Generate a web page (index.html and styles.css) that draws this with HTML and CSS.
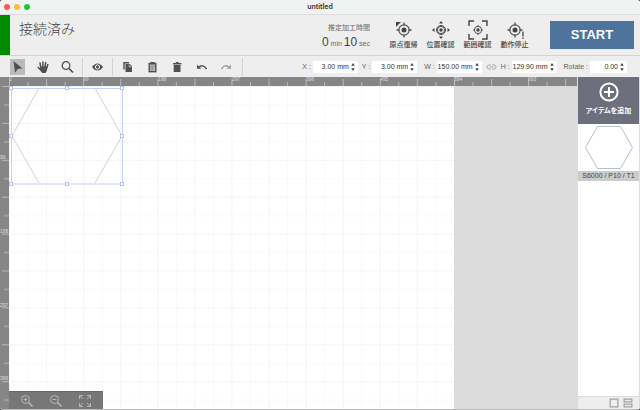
FILE: index.html
```html
<!DOCTYPE html>
<html lang="ja">
<head>
<meta charset="utf-8">
<title>untitled</title>
<link rel="stylesheet" href="styles.css">
</head>
<body>
<svg class="defs" aria-hidden="true">
  <defs>
    <g id="target" fill="none" stroke="#505050">
      <circle cx="10" cy="10" r="5.2" stroke-width="1.2"/>
      <circle cx="10" cy="10" r="2.5" fill="#444" stroke="none"/>
      <path d="M10 2.5v3M10 14.5v3M2.5 10h3M14.5 10h3" stroke-width="1.3"/>
    </g>
    <g id="target-small" fill="none" stroke="#505050">
      <circle cx="10" cy="10" r="3.6"/>
      <circle cx="10" cy="10" r="1.7" fill="#444" stroke="none"/>
      <path d="M10 5v2M10 13v2M5 10h2M13 10h2"/>
    </g>
    <g id="step" fill="#444"><path d="M0 3l2-3 2 3zM0 6l2 3 2-3z"/></g>
  </defs>
</svg>
<div class="window">
  <header class="titlebar">
    <div class="lights"><i class="red"></i><i class="yellow"></i><i class="green"></i></div>
    <h1>untitled</h1>
  </header>

  <section class="status">
    <div class="status-flag"></div>
    <p class="state">接続済み</p>
    <div class="estimate">
      <span>推定加工時間</span>
      <p><b>0</b> min <b>10</b> sec</p>
    </div>
    <div class="actions">
      <button type="button"><svg viewBox="0 0 20 20"><use href="#target"/><path d="M2 2h5L2 7z" fill="#444"/></svg>原点復帰</button>
      <button type="button"><svg viewBox="0 0 20 20"><use href="#target-small"/><circle cx="10" cy="10" r="4.500" fill="none" stroke="#505050"/><path d="M10 1l2 2.500H8zM10 19l2-2.500H8zM1 10l2.500-2v4zM19 10l-2.500-2v4z" fill="#444"/></svg>位置確認</button>
      <button type="button"><svg viewBox="0 0 20 20"><use href="#target-small"/><path d="M1 6V1h5M14 1h5v5M19 14v5h-5M6 19H1v-5" fill="none" stroke="#444" stroke-width="1.400"/></svg>範囲確認</button>
      <button type="button"><svg viewBox="0 0 20 20"><use href="#target"/><path d="M18 11.500v5M18 17.500v1.500" stroke="#444" stroke-width="1.300"/></svg>動作停止</button>
    </div>
    <button type="button" class="start">START</button>
  </section>

  <nav class="toolbar">
    <button type="button" class="tool selected" aria-label="Select"><svg viewBox="0 0 14 14"><path d="M2.500 1l9 7.500-4.500.300-3 4z" fill="#505050"/></svg></button>
    <button type="button" class="tool" aria-label="Hand"><svg viewBox="0 0 14 14"><path d="M4.800 7.500L4 3M6.900 7V2M9 7l.6-4.500M10.800 8l1-3.500M5 10L2.200 7.600" stroke="#505050" stroke-width="1.500" stroke-linecap="round"/><path d="M4.200 6.500h7.200l-.6 4.500-1.300 2H6.200L3.500 9.500z" fill="#505050"/></svg></button>
    <button type="button" class="tool" aria-label="Zoom"><svg viewBox="0 0 14 14"><circle cx="5" cy="5.500" r="3.800" fill="none" stroke="#505050" stroke-width="1.300"/><path d="M8 8.500l4 4" stroke="#505050" stroke-width="1.700"/></svg></button>
    <span class="rule"></span>
    <button type="button" class="tool" aria-label="View"><svg viewBox="0 0 14 14"><path d="M1 7Q3.500 3.400 6.500 3.400T12 7Q9.500 10.600 6.500 10.600T1 7z" fill="#505050"/><circle cx="6.500" cy="7" r="2.100" fill="#505050" stroke="#fff" stroke-width="1"/></svg></button>
    <span class="rule"></span>
    <button type="button" class="tool" aria-label="Copy"><svg viewBox="0 0 14 14"><path d="M3 9.500V2.700h5" fill="none" stroke="#505050" stroke-width="1.400"/><path d="M4.500 4h4.200L11 6.300V12H4.500z" fill="#505050"/><path d="M8.200 4.600v2.200h2.200" fill="none" stroke="#eee" stroke-width=".7"/></svg></button>
    <button type="button" class="tool" aria-label="Paste"><svg viewBox="0 0 14 14"><rect x="3.200" y="3.500" width="6.600" height="8.200" fill="#bbb" stroke="#505050" stroke-width="1.400"/><path d="M4.500 2h4v2.600h-4z" fill="#505050"/><path d="M4.500 6.500h4M4.500 8.300h4M4.500 10H7" stroke="#777" stroke-width=".7"/></svg></button>
    <button type="button" class="tool" aria-label="Delete"><svg viewBox="0 0 14 14"><path d="M2 3h2.500l.5-1h2.500l.5 1h2.500v1.400H2zM2.700 5h6.800v7H2.700z" fill="#505050"/></svg></button>
    <button type="button" class="tool" aria-label="Undo"><svg viewBox="0 0 14 14"><path d="M1 4.500v4.300h4.300z" fill="#505050"/><path d="M2.500 7.500Q7 3.500 10.500 9" fill="none" stroke="#505050" stroke-width="1.400"/></svg></button>
    <button type="button" class="tool faded" aria-label="Redo"><svg viewBox="0 0 14 14"><path d="M10 4.500v4.300H5.700z" fill="#505050"/><path d="M8.500 7.500Q4 3.500.5 9" fill="none" stroke="#505050" stroke-width="1.400"/></svg></button>
    <span class="rule last"></span>
    <form class="fields">
      <label>X : <span class="field"><input value="3.00 mm"><svg viewBox="0 0 4 9"><use href="#step"/></svg></span></label>
      <label>Y : <span class="field"><input value="3.00 mm"><svg viewBox="0 0 4 9"><use href="#step"/></svg></span></label>
      <label class="size">W : <span class="field"><input value="150.00 mm"><svg viewBox="0 0 4 9"><use href="#step"/></svg></span></label>
      <svg class="link" viewBox="0 0 11 6"><path d="M5 1H3a2 2 0 0 0 0 4h2M6 1h2a2 2 0 0 1 0 4H6M3.500 3h4" fill="none" stroke="#aaa"/></svg>
      <label>H : <span class="field"><input value="129.90 mm"><svg viewBox="0 0 4 9"><use href="#step"/></svg></span></label>
      <label class="size">Rotate : <span class="field narrow"><input value="0.00"><svg viewBox="0 0 4 9"><use href="#step"/></svg></span></label>
    </form>
  </nav>

  <main class="workspace">
    <div class="stage">
      <svg class="canvas" aria-label="Work area">
        <defs>
          <pattern id="grid" x="9" y="9" width="37.080" height="36.900" patternUnits="userSpaceOnUse">
            <path d="M.5 0v37M0 .5h37.100" stroke="#f4f4f4"/>
            <path d="M19 0v37M0 19h37.100" stroke="#fdf7f7"/>
          </pattern>
          <pattern id="ticks-x" x="9" y="0" width="37.080" height="9" patternUnits="userSpaceOnUse">
            <path d="M.5 2v7M19 5v4" stroke="#b9b9b9"/>
          </pattern>
          <pattern id="ticks-y" x="0" y="9" width="9" height="36.900" patternUnits="userSpaceOnUse">
            <path d="M2 .5h7M4 19h5" stroke="#b9b9b9"/>
          </pattern>
        </defs>
        <rect width="100%" height="100%" fill="#dbdbdb"/>
        <rect x="9" y="9" width="445" height="100%" fill="#fff"/>
        <rect x="9" y="9" width="445" height="100%" fill="url(#grid)"/>
        <rect width="100%" height="9" fill="#868686"/>
        <rect width="9" height="100%" fill="#868686"/>
        <rect x="9" width="100%" height="9" fill="url(#ticks-x)"/>
        <rect y="9" width="9" height="100%" fill="url(#ticks-y)"/>
        <g class="numbers">
          <text x="9" y="4">0</text><text x="83" y="4">99</text><text x="158" y="4">198</text><text x="232" y="4">297</text><text x="306" y="4">396</text><text x="380" y="4">495</text><text x="454" y="4">594</text><text x="528" y="4">693</text>
          <text x="0" y="82">99</text><text x="0" y="156">198</text><text x="0" y="230">297</text><text x="0" y="303">396</text>
        </g>
        <path d="M39 11L12 59l27 47M95 11l27 48-27 47" fill="none" stroke="#c6c6c6" stroke-width=".8"/>
        <rect x="11.500" y="11.500" width="111" height="95.500" fill="none" stroke="#c3d0fa"/>
        <g fill="#fff" stroke="#b4c4f8">
          <rect x="9.500" y="9.500" width="3" height="3"/><rect x="65.500" y="9.500" width="3" height="3"/><rect x="120.500" y="9.500" width="3" height="3"/>
          <rect x="9.500" y="57.500" width="3" height="3"/><rect x="120.500" y="57.500" width="3" height="3"/>
          <rect x="9.500" y="105.500" width="3" height="3"/><rect x="65.500" y="105.500" width="3" height="3"/><rect x="120.500" y="105.500" width="3" height="3"/>
        </g>
      </svg>
      <div class="zoombar">
        <button type="button" aria-label="Zoom in"><svg viewBox="0 0 14 14"><circle cx="5.500" cy="5.500" r="4"/><path d="M8.500 8.500l4 4" stroke-width="1.600"/><path d="M3.500 5.500h4M5.500 3.500v4"/></svg></button>
        <button type="button" aria-label="Zoom out"><svg viewBox="0 0 14 14"><circle cx="5.500" cy="5.500" r="4"/><path d="M8.500 8.500l4 4" stroke-width="1.600"/><path d="M3.500 5.500h4"/></svg></button>
        <button type="button" aria-label="Fit"><svg viewBox="0 0 14 14"><path d="M1.500 5V1.500H5M1.500 1.500l3.500 3.500M9 1.500h3.500V5M12.500 1.500L9 5M1.500 9v3.500H5M1.500 12.500L5 9M12.500 9v3.500H9M12.500 12.500L9 9"/></svg></button>
      </div>
    </div>
    <aside class="items">
      <button type="button" class="add"><svg viewBox="0 0 20 20"><circle cx="10" cy="10" r="8.600"/><path d="M10 5v10M5 10h10"/></svg>アイテムを追加</button>
      <div class="item">
        <svg viewBox="0 0 48 43"><path d="M12.500.5h23l12 21-12 21h-23l-12-21z" fill="none" stroke="#b4bfd4"/></svg>
        <p>S6000 / P10 / T1</p>
      </div>
      <footer>
        <button type="button" aria-label="Single view"><svg viewBox="0 0 9 9"><rect x="1" y="1" width="7" height="7"/></svg></button>
        <button type="button" aria-label="List view"><svg viewBox="0 0 9 9"><rect x="1" y="1" width="7" height="2.500"/><rect x="1" y="5.500" width="7" height="2.500"/></svg></button>
      </footer>
    </aside>
  </main>
</div>
</body>
</html>
```
FILE: styles.css
```css
* { box-sizing: border-box; margin: 0; }

body {
  background: #333;
  color: #444;
  font: 7px/10px "Liberation Sans", "Noto Sans CJK JP", sans-serif;
}

button {
  padding: 0;
  border: 0;
  background: none;
  color: inherit;
  font: inherit;
}

svg { display: block; flex: none; }
.defs { position: absolute; width: 0; height: 0; }

.window {
  display: flex;
  flex-direction: column;
  height: 100vh;
  overflow: hidden;
  border-bottom: 1px solid #bbb;
  border-radius: 3px;
  background: #eee;
}

.titlebar {
  display: grid;
  grid-template-columns: 1fr auto 1fr;
  align-items: center;
  height: 14px;
  padding: 0 4px;
  background: #f1f3f2;
}

.titlebar h1 {
  color: #333;
  font: 600 7px/10px Inter, sans-serif;
}

.lights { display: flex; gap: 4px; }
.lights i { width: 6px; height: 6px; border-radius: 50%; }
.red { background: #fc5753; }
.yellow { background: #fdbc40; }
.green { background: #1fc636; }

.status {
  display: flex;
  align-items: center;
  height: 42px;
  padding-right: 6px;
  border-top: 1px solid #ddd;
  border-bottom: 1px solid #d2d2d2;
}

.status-flag { align-self: stretch; width: 10px; background: #008a00; }

.state {
  flex: 1;
  align-self: flex-start;
  padding: 4px 9px;
  font-size: 14px;
  font-weight: 300;
  line-height: 20px;
}

.estimate { padding-top: 5px; color: #666; text-align: right; }
.estimate span { display: block; }
.estimate p { font-size: 7px; line-height: 18px; }
.estimate b { font-size: 12px; font-weight: 400; color: #444; }

.actions { display: flex; margin: 0 17px 0 15px; }

.actions button {
  display: flex;
  flex-direction: column;
  align-items: center;
  width: 37px;
  font-size: 7px;
  font-weight: 500;
  white-space: nowrap;
}

.actions svg { width: 20px; height: 20px; }

.start {
  width: 84px;
  height: 28px;
  background: #4e749d;
  color: #fff;
  font-size: 13px;
  font-weight: 700;
  line-height: 28px;
}

.toolbar {
  display: flex;
  align-items: center;
  gap: 10px;
  height: 21px;
  padding: 0 13px 0 10px;
}

.tool {
  display: grid;
  place-items: center;
  width: 15px;
  height: 16px;
}

.tool svg { width: 14px; height: 14px; }
.selected { background: #bbb; }
.faded { opacity: .5; }

.rule { width: 1px; height: 18px; margin: 0 -3px; background: #d2d2d2; }

.fields {
  display: flex;
  flex: 1;
  align-items: center;
  justify-content: flex-end;
  gap: 4px;
}

.fields label {
  display: flex;
  align-items: center;
  color: #666;
  white-space: pre;
}

.fields .size { margin-left: 3px; }

.field {
  display: flex;
  align-items: center;
  width: 45px;
  height: 12px;
  padding-right: 3px;
  background: #fff;
}

.narrow { width: 37px; }

.field input {
  flex: 1;
  min-width: 0;
  padding: 0 2px 0 0;
  border: 0;
  outline: 0;
  background: none;
  color: #333;
  font: inherit;
  text-align: right;
}

.field svg { width: 4px; height: 8px; }
.link { width: 11px; height: 6px; }

.workspace { display: flex; flex: 1; min-height: 0; }

.stage { position: relative; flex: 1; min-width: 0; }
.canvas { width: 100%; height: 100%; }
.numbers { fill: #ddd; font-size: 5px; }

.zoombar {
  position: absolute;
  bottom: 0;
  left: 9px;
  display: flex;
  align-items: center;
  gap: 15px;
  height: 18px;
  padding: 0 11px;
  border-top: 1px solid #686868;
  background: #777;
}

.zoombar svg {
  width: 14px;
  height: 14px;
  fill: none;
  stroke: #b8b8b8;
}

.items {
  display: flex;
  flex-direction: column;
  width: 63px;
  border: solid #ddd;
  border-width: 0 1px;
  background: #fff;
}

.add {
  display: flex;
  flex-direction: column;
  align-items: center;
  gap: 4px;
  height: 47px;
  padding-top: 5px;
  background: #6d6f7d;
  color: #fff;
  font-weight: 700;
  font-feature-settings: "palt";
}

.add svg {
  width: 20px;
  height: 20px;
  fill: none;
  stroke: #fff;
  stroke-width: 2;
}

.item svg { width: 48px; height: 43px; margin: 2px auto; }
.item p { background: #ccc; text-align: center; }

.items footer {
  display: flex;
  justify-content: flex-end;
  gap: 4px;
  margin-top: auto;
  padding: 1px 6px;
  border-top: 1px solid #ddd;
  background: #eee;
}

.items footer svg {
  width: 10px;
  height: 10px;
  fill: none;
  stroke: #999;
}
```
